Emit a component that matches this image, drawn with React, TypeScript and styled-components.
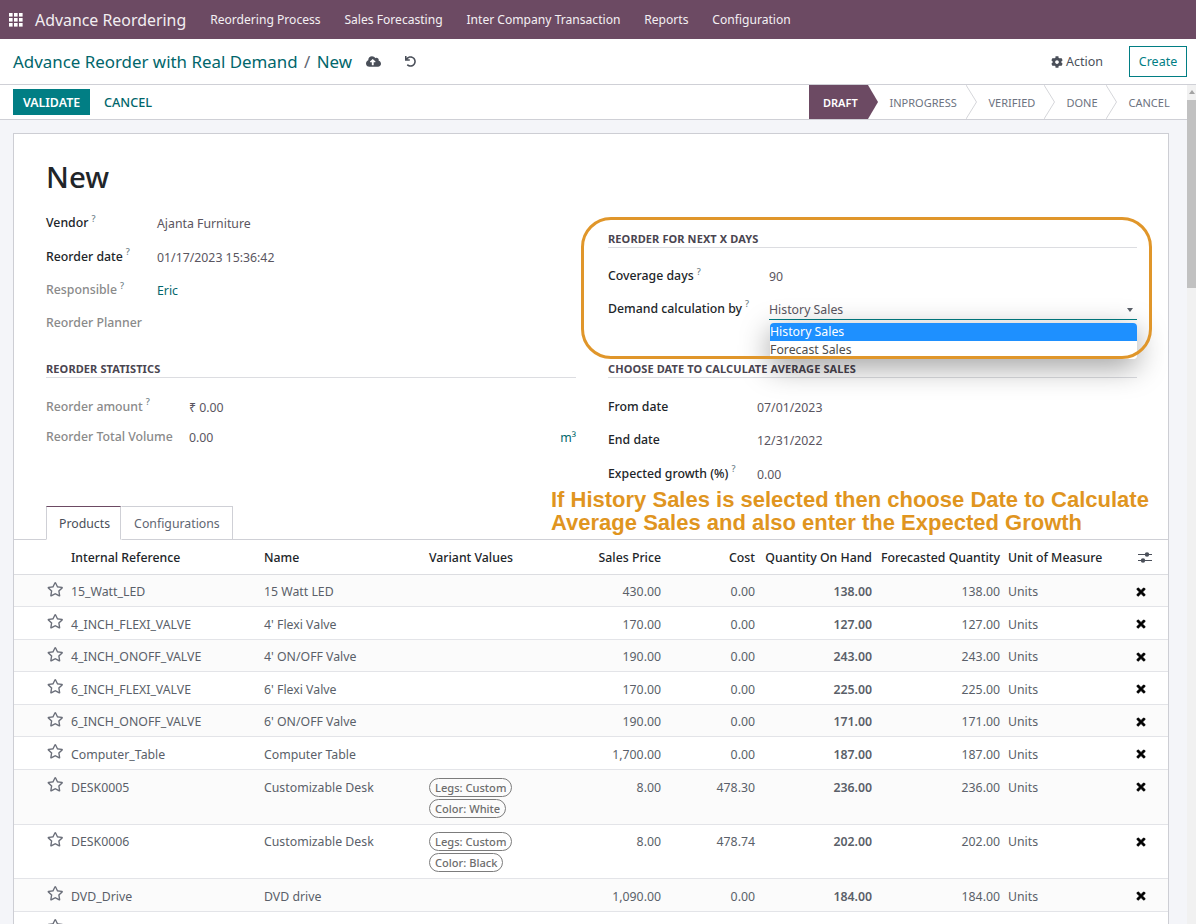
import React from 'react';
import styled, { createGlobalStyle } from 'styled-components';
import { FaCloudUploadAlt, FaCog, FaRegStar, FaTimes, FaUndo } from 'react-icons/fa';

const GlobalStyle = createGlobalStyle`
  html, body { margin: 0; padding: 0; height: 100%; overflow: hidden; }
  body { font-family: "Noto Sans", "Open Sans", sans-serif; font-size: 12.3px; color: #4c4c4c; background: #fff; }
  * { box-sizing: border-box; }
`;

const Page = styled.div`
  height: 924px;
  display: flex;
  flex-direction: column;
  overflow: hidden;
`;

const Navbar = styled.header`
  height: 39px;
  flex: none;
  background: #6c4a63;
  color: #fff;
  display: flex;
  align-items: center;
  padding-left: 9px;
`;

const AppName = styled.span`
  font-size: 15.9px;
  margin: 0 24px 0 12px;
  color: #f2eef1;
`;

const NavItem = styled.span`
  font-size: 12.1px;
  margin-right: 23.8px;
  color: #f4f0f3;
`;

const ControlPanel = styled.div`
  height: 46px;
  flex: none;
  display: flex;
  align-items: center;
  background: #fff;
  border-bottom: 1px solid #cfd0d6;
  padding: 0 9px 0 13px;
`;

const Breadcrumb = styled.div`
  font-size: 16.9px;
  color: #01666b;
`;

const Slash = styled.span`
  margin: 0 2px;
  color: #5f6672;
`;

const PanelIcon = styled.span<{ $gap: number }>`
  display: inline-flex;
  margin-left: ${p => p.$gap}px;
  color: #4a4f59;
`;

const Spacer = styled.div`
  flex: 1;
`;

const ActionLink = styled.span`
  display: inline-flex;
  align-items: center;
  gap: 3px;
  color: #4a4f59;
  font-size: 12.5px;
  margin-right: 26px;
`;

const CreateButton = styled.button`
  width: 58px;
  height: 31px;
  border: 1px solid #017e84;
  background: #fff;
  color: #017e84;
  font: 12.5px "Noto Sans", sans-serif;
  padding: 0;
`;

const Body = styled.div`
  flex: 1;
  min-height: 0;
  display: flex;
`;

const Scrollarea = styled.div`
  flex: 1;
  min-width: 0;
  background: #f4f5f9;
  overflow: hidden;
`;

const Scrollbar = styled.div`
  width: 9px;
  flex: none;
  background: #f1f1f1;
  display: flex;
  flex-direction: column;
  align-items: center;
`;

const ScrollArrow = styled.div`
  margin: 5px 0 6px;
  border-left: 3px solid transparent;
  border-right: 3px solid transparent;
  border-bottom: 4px solid #a3a3a3;
`;

const ScrollThumb = styled.div`
  width: 100%;
  height: 188px;
  background: #c1c1c1;
`;

const StatusRow = styled.div`
  height: 35px;
  display: flex;
  align-items: center;
  background: #fff;
  border-bottom: 1px solid #cfd0d6;
  padding-left: 13px;
`;

const ValidateButton = styled.button`
  width: 77px;
  height: 26px;
  border: 0;
  background: #017e84;
  color: #fff;
  font: 600 12.4px "Noto Sans", sans-serif;
  padding: 0;
`;

const CancelButton = styled.button`
  border: 0;
  background: none;
  color: #01666b;
  font: 500 12.7px "Noto Sans", sans-serif;
  padding: 0;
  margin-left: 14px;
`;

const StatusBar = styled.div`
  display: flex;
  align-items: stretch;
  height: 34px;
  margin-left: auto;
`;

const DraftStep = styled.div`
  width: 69px;
  background: #6c4a63;
  color: #fff;
  font-weight: 600;
  font-size: 11px;
  display: flex;
  align-items: center;
  padding-left: 14px;
  clip-path: polygon(0 0, 59px 0, 100% 50%, 59px 100%, 0 100%);
`;

const Step = styled.div<{ $w: number }>`
  width: ${p => p.$w}px;
  display: flex;
  align-items: center;
  justify-content: space-between;
  color: #6c7280;
  font-size: 11px;
  padding-left: 11.5px;
`;

const Chevron = () => (
  <svg width="11" height="34" viewBox="0 0 11 34" fill="none">
    <path d="M0 0 L10.5 17 L0 34" stroke="#d5d6da" strokeWidth="1" />
  </svg>
);

const Sheet = styled.main`
  position: relative;
  width: 1156px;
  margin: 13px 0 0 13px;
  height: 800px;
  background: #fff;
  border: 1px solid #cdced4;
`;

const SheetHead = styled.div`
  padding: 21px 32px 0 32px;
`;

const Title = styled.h1`
  margin: 0;
  font-size: 29.5px;
  line-height: 43px;
  font-weight: 500;
  color: #212529;
`;

const TopGroup = styled.div`
  height: 154px;
  display: flex;
  flex-direction: column;
`;

const Columns = styled.div<{ $top?: number }>`
  display: grid;
  grid-template-columns: 530px 529px;
  column-gap: 32px;
  margin-top: ${p => p.$top ?? 0}px;
`;

const FieldRow = styled.div<{ $h?: number; $pad?: number; $labelW: number }>`
  height: ${p => p.$h ?? 33.4}px;
  padding-top: ${p => p.$pad ?? 0}px;
  display: grid;
  grid-template-columns: ${p => p.$labelW}px 1fr;
  align-items: center;
`;

const Label = styled.span<{ $muted?: boolean }>`
  font-weight: 500;
  color: ${p => (p.$muted ? '#8a8a8a' : '#212529')};
  white-space: nowrap;
`;

const Help = styled.sup`
  font-size: 9px;
  color: #6f7f88;
  margin-left: 3px;
  line-height: 0;
`;

const Value = styled.span<{ $link?: boolean }>`
  color: ${p => (p.$link ? '#01666b' : '#5a5560')};
  padding-top: 2px;
  white-space: nowrap;
`;

const SplitValue = styled(Value)`
  display: flex;
  justify-content: space-between;
`;

const UnitText = styled.span`
  color: #01666b;
`;

const RightTop = styled.div`
  padding-top: 24px;
`;

const GroupTitle = styled.div`
  font-size: 11px;
  font-weight: 700;
  line-height: 17px;
  color: #4a4550;
  border-bottom: 1px solid #dcdde1;
  letter-spacing: 0.1px;
`;

const SelectBox = styled.div`
  position: relative;
  height: 22px;
  border-bottom: 1px solid #017e84;
  display: flex;
  align-items: center;
  justify-content: space-between;
  color: #5a5560;
  padding-top: 2px;
  margin-top: 2px;
`;

const Caret = styled.span`
  margin-right: 4px;
  border-left: 3px solid transparent;
  border-right: 3px solid transparent;
  border-top: 4px solid #5a5f69;
`;

const Options = styled.div`
  position: absolute;
  top: 25px;
  left: 1px;
  right: 0;
  height: 36px;
  background: #fff;
  border-radius: 4px;
  box-shadow: 0 8px 30px rgba(0, 0, 0, 0.38);
  overflow: hidden;
  z-index: 3;
`;

const Option = styled.div<{ $active?: boolean }>`
  height: 18px;
  line-height: 18px;
  background: ${p => (p.$active ? '#1e90ff' : '#fff')};
  color: ${p => (p.$active ? '#fff' : '#4c4c4c')};
  white-space: nowrap;
`;

const Highlight = styled.div`
  position: absolute;
  left: 567px;
  top: 83px;
  width: 571px;
  height: 142px;
  border: 3px solid #e0962a;
  border-radius: 30px;
  z-index: 4;
  pointer-events: none;
`;

const Note = styled.div`
  position: absolute;
  left: 537px;
  top: 355px;
  white-space: nowrap;
  font: 700 22px/22.6px "Liberation Sans", Arial, sans-serif;
  color: #e0951f;
  z-index: 4;
`;

const Tabs = styled.div`
  display: flex;
  height: 34px;
  margin-top: 12px;
  padding-left: 32px;
  border-bottom: 1px solid #cfd0d6;
`;

const Tab = styled.div<{ $active?: boolean }>`
  height: 34px;
  display: flex;
  align-items: center;
  padding: 0 ${p => (p.$active ? 10 : 12)}px 0 12px;
  background: #fff;
  color: ${p => (p.$active ? '#4a4f59' : '#5f6672')};
  border: 1px solid #cfd0d6;
  border-top: 1px solid ${p => (p.$active ? '#6c4a63' : '#cfd0d6')};
  border-left: 1px solid ${p => (p.$active ? '#cfd0d6' : 'transparent')};
  border-bottom: 1px solid ${p => (p.$active ? '#fff' : '#cfd0d6')};
`;

const Table = styled.table`
  width: 100%;
  border-collapse: collapse;
  table-layout: fixed;
`;

const Th = styled.th<{ $right?: boolean }>`
  height: 34px;
  padding: 2px 0 0;
  font-weight: 500;
  color: #212529;
  text-align: ${p => (p.$right ? 'right' : 'left')};
  border-bottom: 1px solid #dcdde1;
  white-space: nowrap;
`;

const SlidersHead = styled(Th)`
  padding: 5px 0 0 5px;
`;

const Row = styled.tr<{ $odd: boolean }>`
  background: ${p => (p.$odd ? '#fbfbfb' : '#fff')};
`;

const Td = styled.td<{ $right?: boolean; $bold?: boolean }>`
  padding: 9.5px 0 0;
  height: 32.6px;
  vertical-align: top;
  line-height: 16px;
  color: #5a5f69;
  text-align: ${p => (p.$right ? 'right' : 'left')};
  font-weight: ${p => (p.$bold ? 600 : 400)};
  border-bottom: 1px solid #e3e4e8;
  white-space: nowrap;
`;

const StarCell = styled(Td)`
  padding: 6px 0 0 33px;
  color: #6b6f7a;
  font-size: 16.5px;
  line-height: 16px;
`;

const RemoveCell = styled(Td)`
  color: #000;
  font-size: 12px;
  text-align: center;
  padding: 11px 20px 0 0;

  svg {
    stroke: #000;
    stroke-width: 30;
  }
`;

const Tags = styled.div`
  display: flex;
  flex-direction: column;
  align-items: flex-start;
  gap: 2px;
  margin: -2px 0 6px;
`;

const Tag = styled.span`
  border: 1px solid #7c7c7c;
  border-radius: 10px;
  padding: 0 5px;
  height: 19px;
  line-height: 17px;
  font-size: 11.1px;
  font-weight: 500;
  color: #6d6d6d;
`;

const Grid = () => (
  <svg width="14" height="14" viewBox="0 0 14 14" fill="#fff">
    {[0, 5, 10].flatMap(y =>
      [0, 5, 10].map(x => <rect key={`${x}-${y}`} x={x} y={y} width="3.6" height="3.6" />)
    )}
  </svg>
);

const Sliders = () => (
  <svg width="14" height="13" viewBox="0 0 14 13" fill="#4a4f59">
    <rect x="0" y="3" width="14" height="1" />
    <rect x="0" y="9" width="14" height="1" />
    <circle cx="9" cy="3.5" r="2.2" />
    <circle cx="5" cy="9.5" r="2.2" />
  </svg>
);

type Product = {
  ref: string;
  name: string;
  tags?: string[];
  price: string;
  cost: string;
  onHand: string;
};

const products: Product[] = [
  { ref: '15_Watt_LED', name: '15 Watt LED', price: '430.00', cost: '0.00', onHand: '138.00' },
  { ref: '4_INCH_FLEXI_VALVE', name: "4' Flexi Valve", price: '170.00', cost: '0.00', onHand: '127.00' },
  { ref: '4_INCH_ONOFF_VALVE', name: "4' ON/OFF Valve", price: '190.00', cost: '0.00', onHand: '243.00' },
  { ref: '6_INCH_FLEXI_VALVE', name: "6' Flexi Valve", price: '170.00', cost: '0.00', onHand: '225.00' },
  { ref: '6_INCH_ONOFF_VALVE', name: "6' ON/OFF Valve", price: '190.00', cost: '0.00', onHand: '171.00' },
  { ref: 'Computer_Table', name: 'Computer Table', price: '1,700.00', cost: '0.00', onHand: '187.00' },
  { ref: 'DESK0005', name: 'Customizable Desk', tags: ['Legs: Custom', 'Color: White'], price: '8.00', cost: '478.30', onHand: '236.00' },
  { ref: 'DESK0006', name: 'Customizable Desk', tags: ['Legs: Custom', 'Color: Black'], price: '8.00', cost: '478.74', onHand: '202.00' },
  { ref: 'DVD_Drive', name: 'DVD drive', price: '1,090.00', cost: '0.00', onHand: '184.00' },
];

const App: React.FC = () => (
  <>
    <GlobalStyle />
    <Page>
      <Navbar>
        <Grid />
        <AppName>Advance Reordering</AppName>
        <NavItem>Reordering Process</NavItem>
        <NavItem>Sales Forecasting</NavItem>
        <NavItem>Inter Company Transaction</NavItem>
        <NavItem>Reports</NavItem>
        <NavItem>Configuration</NavItem>
      </Navbar>
      <ControlPanel>
        <Breadcrumb>Advance Reorder with Real Demand <Slash>/</Slash> New</Breadcrumb>
        <PanelIcon $gap={14}><FaCloudUploadAlt size={15} /></PanelIcon>
        <PanelIcon $gap={24}><FaUndo size={11} /></PanelIcon>
        <Spacer />
        <ActionLink><FaCog size={12} /> Action</ActionLink>
        <CreateButton>Create</CreateButton>
      </ControlPanel>
      <Body>
        <Scrollarea>
          <StatusRow>
            <ValidateButton>VALIDATE</ValidateButton>
            <CancelButton>CANCEL</CancelButton>
            <StatusBar>
              <DraftStep>DRAFT</DraftStep>
              <Step $w={99}>INPROGRESS<Chevron /></Step>
              <Step $w={78}>VERIFIED<Chevron /></Step>
              <Step $w={62}>DONE<Chevron /></Step>
              <Step $w={70}>CANCEL</Step>
            </StatusBar>
          </StatusRow>
          <Sheet>
            <Highlight />
            <Note>
              If History Sales is selected then choose Date to Calculate<br />
              Average Sales and also enter the Expected Growth
            </Note>
            <SheetHead>
              <Title>New</Title>
              <Columns $top={8}>
                <TopGroup>
                  <FieldRow $labelW={111}><Label>Vendor<Help>?</Help></Label><Value>Ajanta Furniture</Value></FieldRow>
                  <FieldRow $labelW={111}><Label>Reorder date<Help>?</Help></Label><Value>01/17/2023 15:36:42</Value></FieldRow>
                  <FieldRow $labelW={111}><Label $muted>Responsible<Help>?</Help></Label><Value $link>Eric</Value></FieldRow>
                  <FieldRow $labelW={111}><Label $muted>Reorder Planner</Label><Value /></FieldRow>
                </TopGroup>
                <RightTop>
                  <GroupTitle>REORDER FOR NEXT X DAYS</GroupTitle>
                  <FieldRow $labelW={161} $h={39} $pad={16}>
                    <Label>Coverage days<Help>?</Help></Label><Value>90</Value>
                  </FieldRow>
                  <FieldRow $labelW={161} $h={42}>
                    <Label>Demand calculation by<Help>?</Help></Label>
                    <SelectBox>
                      History Sales
                      <Caret />
                      <Options>
                        <Option $active>History Sales</Option>
                        <Option>Forecast Sales</Option>
                      </Options>
                    </SelectBox>
                  </FieldRow>
                </RightTop>
              </Columns>
              <Columns>
                <div>
                  <GroupTitle>REORDER STATISTICS</GroupTitle>
                  <FieldRow $labelW={143} $h={48} $pad={8}>
                    <Label $muted>Reorder amount<Help>?</Help></Label><Value>₹ 0.00</Value>
                  </FieldRow>
                  <FieldRow $labelW={143} $h={20}>
                    <Label $muted>Reorder Total Volume</Label>
                    <SplitValue>
                      <span>0.00</span>
                      <UnitText>m³</UnitText>
                    </SplitValue>
                  </FieldRow>
                </div>
                <div>
                  <GroupTitle>CHOOSE DATE TO CALCULATE AVERAGE SALES</GroupTitle>
                  <FieldRow $labelW={149} $h={48} $pad={8}>
                    <Label>From date</Label><Value>07/01/2023</Value>
                  </FieldRow>
                  <FieldRow $labelW={149} $h={26}><Label>End date</Label><Value>12/31/2022</Value></FieldRow>
                  <FieldRow $labelW={149} $h={42}><Label>Expected growth (%)<Help>?</Help></Label><Value>0.00</Value></FieldRow>
                </div>
              </Columns>
            </SheetHead>
            <Tabs>
              <Tab $active>Products</Tab>
              <Tab>Configurations</Tab>
            </Tabs>
            <Table>
              <colgroup>
                <col style={{ width: 57 }} />
                <col style={{ width: 193 }} />
                <col style={{ width: 165 }} />
                <col style={{ width: 70 }} />
                <col style={{ width: 162 }} />
                <col style={{ width: 94 }} />
                <col style={{ width: 117 }} />
                <col style={{ width: 128 }} />
                <col style={{ width: 8 }} />
                <col style={{ width: 125 }} />
                <col />
              </colgroup>
              <thead>
                <tr>
                  <Th />
                  <Th>Internal Reference</Th>
                  <Th>Name</Th>
                  <Th>Variant Values</Th>
                  <Th $right>Sales Price</Th>
                  <Th $right>Cost</Th>
                  <Th $right>Quantity On Hand</Th>
                  <Th $right>Forecasted Quantity</Th>
                  <Th />
                  <Th>Unit of Measure</Th>
                  <SlidersHead><Sliders /></SlidersHead>
                </tr>
              </thead>
              <tbody>
                {products.map((p, i) => (
                  <Row key={p.ref} $odd={i % 2 === 0}>
                    <StarCell><FaRegStar /></StarCell>
                    <Td>{p.ref}</Td>
                    <Td>{p.name}</Td>
                    <Td>
                      {p.tags ? (
                        <Tags>{p.tags.map(t => <Tag key={t}>{t}</Tag>)}</Tags>
                      ) : null}
                    </Td>
                    <Td $right>{p.price}</Td>
                    <Td $right>{p.cost}</Td>
                    <Td $right $bold>{p.onHand}</Td>
                    <Td $right>{p.onHand}</Td>
                    <Td />
                    <Td>Units</Td>
                    <RemoveCell><FaTimes /></RemoveCell>
                  </Row>
                ))}
                <Row $odd={false}>
                  <StarCell><FaRegStar /></StarCell>
                </Row>
              </tbody>
            </Table>
          </Sheet>
        </Scrollarea>
        <Scrollbar>
          <ScrollArrow />
          <ScrollThumb />
        </Scrollbar>
      </Body>
    </Page>
  </>
);

export default App;
